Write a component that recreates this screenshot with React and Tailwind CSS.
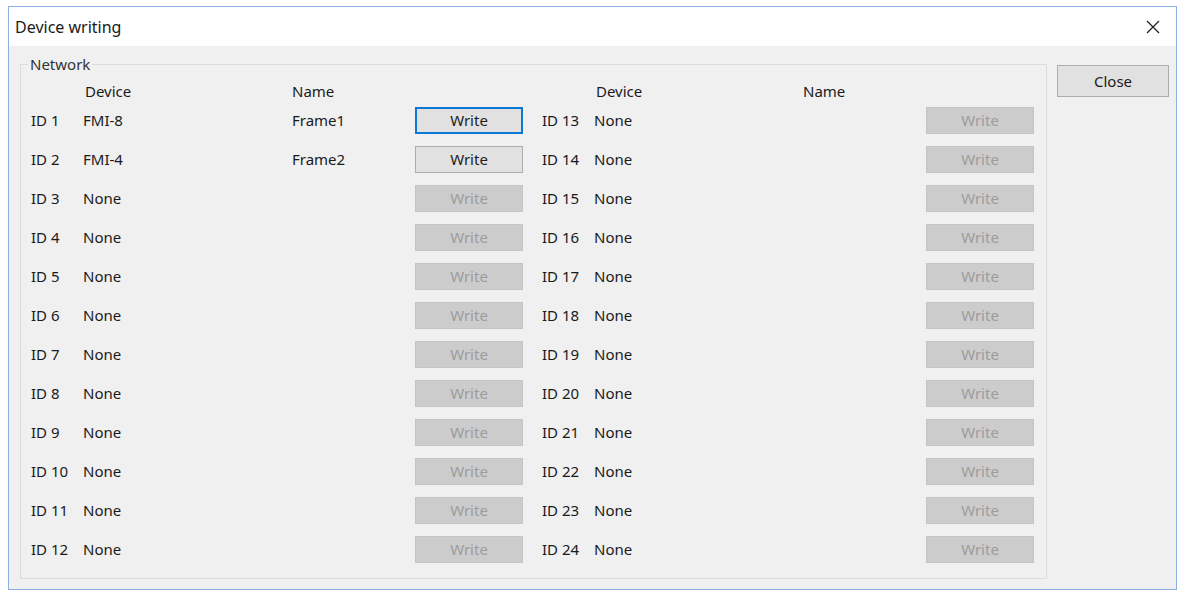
import React from 'react';

const devices = {
  1: { device: 'FMI-8', name: 'Frame1' },
  2: { device: 'FMI-4', name: 'Frame2' },
};

const font = { fontFamily: '"Noto Sans", "Open Sans", sans-serif' };

const WriteButton = ({ enabled, focused }) => {
  if (!enabled) {
    return (
      <button
        disabled
        className="w-[108px] h-[27px] bg-[#cccccc] border border-[#c4c4c4] text-[#9c9c9c] text-[15px] leading-none"
      >
        Write
      </button>
    );
  }
  return (
    <button
      className={`w-[108px] h-[27px] bg-[#e1e1e1] text-[#1e1e1e] text-[15px] leading-none ${
        focused ? 'border-2 border-[#0a78d4]' : 'border border-[#adadad]'
      }`}
    >
      Write
    </button>
  );
};

const DeviceRow = ({ id }) => {
  const d = devices[id];
  return (
    <div className="flex items-center h-[39px]">
      <span className="w-[52px]">ID {id}</span>
      <span className="w-[209px]">{d ? d.device : 'None'}</span>
      <span className="w-[123px]">{d ? d.name : ''}</span>
      <WriteButton enabled={!!d} focused={id === 1} />
    </div>
  );
};

const Column = ({ ids }) => (
  <div className="flex flex-col w-[492px]">
    <div className="flex items-center h-[20px]">
      <span className="w-[52px]" />
      <span className="w-[209px] pl-[2px]">Device</span>
      <span className="w-[123px]">Name</span>
    </div>
    {ids.map(id => (
      <DeviceRow key={id} id={id} />
    ))}
  </div>
);

const App = () => {
  const left = Array.from({ length: 12 }, (_, i) => i + 1);
  const right = Array.from({ length: 12 }, (_, i) => i + 13);

  return (
    <div className="w-[1184px] h-[592px] bg-white pt-[6px] pl-[8px]" style={font}>
      <div className="w-[1169px] h-[584px] border border-[#8cb0e2] flex flex-col text-[#1a1a1a] text-[15px]">
        {/* Title bar */}
        <div className="h-[39px] bg-white flex items-center justify-between pl-[6px] pr-[16px]">
          <span className="text-[16px]">Device writing</span>
          <svg width="14" height="14" viewBox="0 0 14 14" className="text-[#222]">
            <path d="M1 1 L13 13 M13 1 L1 13" stroke="currentColor" strokeWidth="1.3" fill="none" />
          </svg>
        </div>

        {/* Body */}
        <div className="flex-1 bg-[#f0f0f0] flex pl-[11px] pt-[10px] pr-[9px] pb-[9px] gap-[10px]">
          <fieldset className="w-[1026px] h-[523px] border border-[#dcdcdc] pl-[10px] pr-[12px] pt-[9px]">
            <legend className="-ml-[3px] px-[2px] text-[15px] leading-[16px] text-[#333]">Network</legend>
            <div className="flex gap-[19px]">
              <Column ids={left} />
              <Column ids={right} />
            </div>
          </fieldset>

          <div className="pt-[9px]">
            <button className="w-[112px] h-[32px] bg-[#e1e1e1] border border-[#adadad] text-[15px]">
              Close
            </button>
          </div>
        </div>
      </div>
    </div>
  );
};

export default App;
